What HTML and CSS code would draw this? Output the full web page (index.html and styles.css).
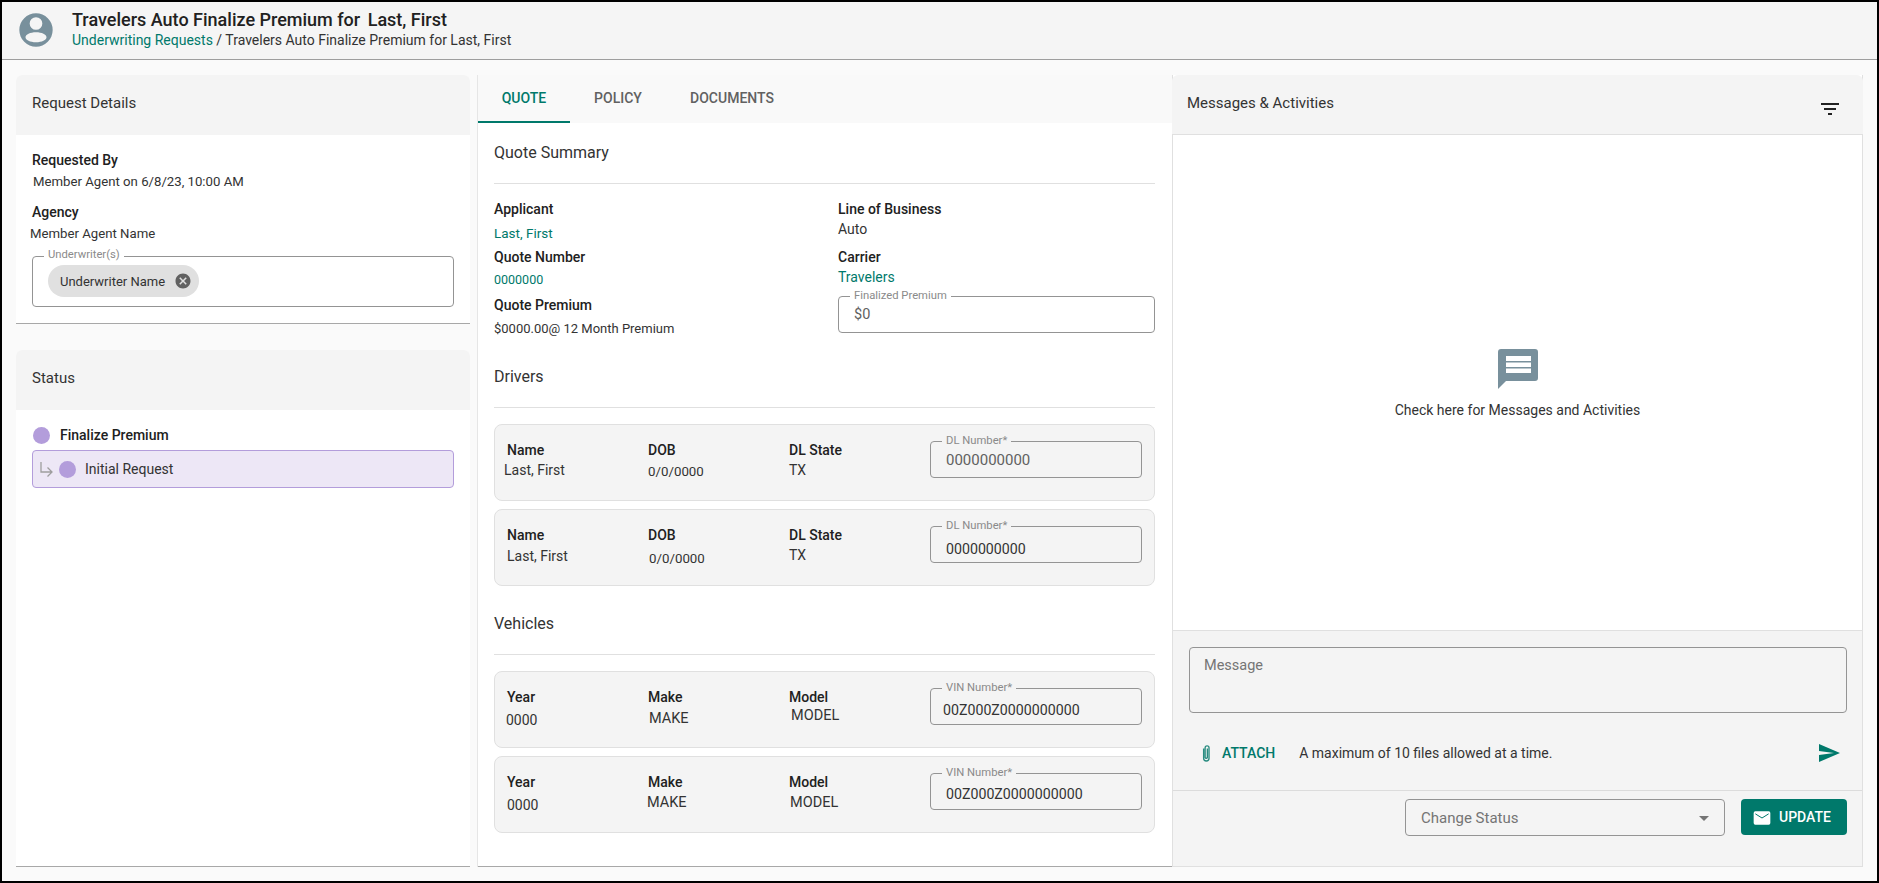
FILE: index.html
```html
<!DOCTYPE html>
<html lang="en">
<head>
<meta charset="utf-8">
<title>Travelers Auto Finalize Premium</title>
<link rel="stylesheet" href="styles.css">
</head>
<body>
<div class="frame">
  <header class="topbar">
    <svg class="avatar" viewBox="0 0 24 24"><path fill-rule="evenodd" d="M12 2a10 10 0 1 0 0 20 10 10 0 0 0 0-20zM12 4.3a3.8 3.8 0 1 0 0 7.6 3.8 3.8 0 0 0 0-7.6zM12 13.4c-3.5 0-6.3 1.3-6.3 3 0 1.7 2.8 3 6.3 3s6.3-1.3 6.3-3c0-1.7-2.8-3-6.3-3z"/></svg>
    <div class="crumbs">
      <div class="page-title">Travelers Auto Finalize Premium for <b>Last, First</b></div>
      <div class="trail"><a class="trail-link">Underwriting Requests</a> / Travelers Auto Finalize Premium for <span class="trail-name">Last, First</span></div>
    </div>
  </header>

  <main class="columns">
    <section class="left">
      <div class="card card-details">
        <h2 class="card-head">Request Details</h2>
        <div class="card-body">
          <div class="label">Requested By</div>
          <div class="value small nudge">Member Agent on 6/8/23, 10:00 AM</div>
          <div class="label agency">Agency</div>
          <div class="value small back">Member Agent Name</div>
          <div class="field uw">
            <span class="legend">Underwriter(s)</span>
            <span class="chip">Underwriter Name
              <svg class="chip-x" viewBox="0 0 24 24"><path d="M12 2C6.47 2 2 6.47 2 12s4.47 10 10 10 10-4.47 10-10S17.53 2 12 2zm5 13.59L15.59 17 12 13.41 8.41 17 7 15.59 10.59 12 7 8.41 8.41 7 12 10.59 15.59 7 17 8.41 13.41 12 17 15.59z"/></svg>
            </span>
          </div>
        </div>
      </div>
      <div class="card card-status">
        <h2 class="card-head">Status</h2>
        <div class="card-body">
          <div class="status-top"><i class="dot"></i><b>Finalize Premium</b></div>
          <div class="status-sub">
            <svg class="sub-arrow" viewBox="0 0 13 15"><path d="M1 0v10h11M7.5 5.5l4.5 4.5-4.5 4.5"/></svg>
            <i class="dot"></i>Initial Request
          </div>
        </div>
      </div>
    </section>

    <section class="center">
      <nav class="tabs">
        <span class="tab active">QUOTE</span>
        <span class="tab">POLICY</span>
        <span class="tab">DOCUMENTS</span>
      </nav>
      <div class="center-body">
        <h3 class="section-title summary-title">Quote Summary</h3>
        <div class="summary">
          <div class="sum-col">
            <div class="label">Applicant</div>
            <div class="value teal v-name">Last, First</div>
            <div class="label l-number">Quote Number</div>
            <div class="value teal v-number">0000000</div>
            <div class="label l-premium">Quote Premium</div>
            <div class="value v-premium">$0000.00@ 12 Month Premium</div>
          </div>
          <div class="sum-col">
            <div class="label">Line of Business</div>
            <div class="value">Auto</div>
            <div class="label l-carrier">Carrier</div>
            <div class="value teal">Travelers</div>
            <div class="field premium">
              <span class="legend">Finalized Premium</span>
              <span class="field-val muted">$0</span>
            </div>
          </div>
        </div>
        <h3 class="section-title">Drivers</h3>
        <div class="rows">
          <div class="row">
            <div class="cell"><div class="label">Name</div><div class="value sl3">Last, First</div></div>
            <div class="cell"><div class="label">DOB</div><div class="value date d2">0/0/0000</div></div>
            <div class="cell"><div class="label">DL State</div><div class="value">TX</div></div>
            <div class="field num"><span class="legend">DL Number*</span><span class="field-val muted big">0000000000</span></div>
          </div>
          <div class="row">
            <div class="cell"><div class="label">Name</div><div class="value d1">Last, First</div></div>
            <div class="cell"><div class="label">DOB</div><div class="value date d4 sr1">0/0/0000</div></div>
            <div class="cell"><div class="label">DL State</div><div class="value">TX</div></div>
            <div class="field num"><span class="legend">DL Number*</span><span class="field-val low4">0000000000</span></div>
          </div>
        </div>
        <h3 class="section-title veh-title">Vehicles</h3>
        <div class="rows">
          <div class="row">
            <div class="cell"><div class="label">Year</div><div class="value d3 sl1">0000</div></div>
            <div class="cell"><div class="label">Make</div><div class="value caps d2 sr1">MAKE</div></div>
            <div class="cell"><div class="label">Model</div><div class="value caps up1 sr2">MODEL</div></div>
            <div class="field num"><span class="legend">VIN Number*</span><span class="field-val low3 sl3">00Z000Z0000000000</span></div>
          </div>
          <div class="row">
            <div class="cell"><div class="label">Year</div><div class="value d3">0000</div></div>
            <div class="cell"><div class="label">Make</div><div class="value caps d1 sl1">MAKE</div></div>
            <div class="cell"><div class="label">Model</div><div class="value caps d1 sr1">MODEL</div></div>
            <div class="field num"><span class="legend">VIN Number*</span><span class="field-val low2">00Z000Z0000000000</span></div>
          </div>
        </div>
      </div>
    </section>

    <section class="right">
      <div class="right-head">
        <h2 class="right-title">Messages &amp; Activities</h2>
        <svg class="filter" viewBox="0 0 24 24"><path d="M10 18h4v-2h-4v2zM3 6v2h18V6H3zm3 7h12v-2H6v2z"/></svg>
      </div>
      <div class="feed">
        <svg class="bubble" viewBox="0 0 40 40"><path fill-rule="evenodd" d="M3 0h34a3 3 0 0 1 3 3v26a3 3 0 0 1-3 3H8l-8 8V3a3 3 0 0 1 3-3zM8 7v5h25V7zM8 13.500v4.500h25v-4.500zM8 19.500v4.500h25v-4.500z"/></svg>
        <p class="feed-text">Check here for Messages and Activities</p>
      </div>
      <div class="composer">
        <div class="message">Message</div>
        <div class="attach-row">
          <svg class="clip" viewBox="0 0 12 24"><path d="M6.500 6v12a1.600 1.600 0 0 1-3 0V5a2.600 2.600 0 0 1 5.200 0v14a3.600 3.600 0 0 1-7.200 0V6"/></svg>
          <span class="attach">ATTACH</span>
          <span class="attach-note">A maximum of 10 files allowed at a time.</span>
          <svg class="send" viewBox="0 0 24 24"><path d="M2 21l21-9L2 3v7l15 2-15 2z"/></svg>
        </div>
      </div>
      <div class="actions">
        <div class="select">Change Status<i class="caret"></i></div>
        <button class="update">
          <svg class="mail" viewBox="0 0 24 24"><path class="mail-body" d="M4 4h16a2 2 0 0 1 2 2v12a2 2 0 0 1-2 2H4a2 2 0 0 1-2-2V6a2 2 0 0 1 2-2z"/><path class="mail-flap" d="M4 7l8 5 8-5"/></svg>UPDATE
        </button>
      </div>
    </section>
  </main>
</div>
</body>
</html>
```

FILE: styles.css
```css
* { box-sizing: border-box; }
html, body { margin: 0; height: 100%; }
body { font-family: Roboto, "Liberation Sans", sans-serif; color: #212121; background: #fafafa; }
h2, h3, p { margin: 0; font-weight: 400; }

.frame { width: 1879px; height: 883px; border: 2px solid #000; display: flex; flex-direction: column; background: #fafafa; overflow: hidden; }

.topbar { height: 58px; flex: none; display: flex; background: #f5f5f5; border-bottom: 1px solid #9e9e9e; padding: 8px 0 0 14px; gap: 16px; }
.avatar { width: 40px; height: 40px; fill: #78909c; flex: none; }
.crumbs { margin-top: -1px; }
.page-title { font-size: 18px; font-weight: 500; line-height: 22px; color: #212121; }
.page-title b { font-weight: 500; margin-left: 3px; }
.trail { font-size: 14px; line-height: 17px; margin-top: 1px; color: #333; }
.trail-link { color: #00796b; }
.trail-name { margin-left: 0; }

.columns { flex: 1; display: grid; grid-template-columns: 454px 702px 691px; padding: 15px 0 14px 14px; }

.left { display: flex; flex-direction: column; }
.card { background: #fff; border-radius: 6px 6px 0 0; border-bottom: 1px solid #a8a8a8; }
.card-details { height: 249px; }
.card-status { margin-top: 26px; flex: 1; }
.card-head { height: 60px; padding: 0 16px 4px; display: flex; align-items: center; font-size: 15px; background: #f4f4f4; border-radius: 6px 6px 0 0; color: #333; }
.card-body { padding: 15px 16px 0; }

.label { font-size: 14px; font-weight: 500; line-height: 20px; color: #212121; }
.value { font-size: 14px; line-height: 20px; color: #333; }
.small { font-size: 13.2px; }
.nudge { margin: 2px 0 0 1px; }
.agency { margin-top: 10px; }
.back { margin: 2px 0 0 -2px; }
.value.teal { color: #00796b; }

.field { position: relative; border: 1px solid #949494; border-radius: 4px; }
.legend { position: absolute; left: 11px; top: -8px; padding: 0 4px; font-size: 11.25px; line-height: 14px; color: #8a8a8a; background: inherit; white-space: nowrap; }
.uw { margin-top: 12px; height: 51px; background: #fff; padding: 8px 15px; }
.uw .legend { top: -9px; }
.chip { display: inline-flex; align-items: center; height: 32px; padding: 0 7px 0 12px; border-radius: 16px; background: #e0e0e0; font-size: 13px; color: #333; }
.chip-x { width: 18px; height: 18px; fill: #616161; margin-left: 9px; }

.status-top { display: flex; align-items: center; font-size: 14px; height: 20px; margin-left: 1px; }
.status-top b { font-weight: 500; }
.status-top .dot { margin-right: 10px; }
.dot { width: 17px; height: 17px; border-radius: 50%; background: #b39ddb; flex: none; }
.status-sub { display: flex; align-items: center; height: 38px; margin-top: 5px; border: 1px solid #b39ddb; border-radius: 4px; background: #ede7f6; font-size: 14px; color: #333; padding-left: 7px; }
.status-sub .dot { margin: 0 9px 0 6px; }
.sub-arrow { width: 13px; height: 15px; fill: none; stroke: #9e9e9e; stroke-width: 1.3; flex: none; margin-top: 1px; }

.center { margin-left: 8px; background: #fff; border-bottom: 1px solid #a8a8a8; box-shadow: -1px 0 0 #e6e6e6; display: flex; flex-direction: column; }
.tabs { height: 48px; display: flex; background: #f9f9f9; flex: none; }
.tab { display: flex; align-items: center; justify-content: center; font-size: 14px; font-weight: 500; color: #616161; padding-bottom: 2px; }
.tab:nth-child(1) { width: 92px; }
.tab:nth-child(2) { width: 96px; }
.tab:nth-child(3) { width: 132px; }
.tab.active { color: #00796b; border-bottom: 2px solid #00796b; padding-bottom: 0; }
.center-body { padding: 0 17px 0 16px; }
.section-title { font-size: 16px; line-height: 20px; height: 60px; padding-top: 19px; border-bottom: 1px solid #e0e0e0; color: #333; }
.summary-title { height: 61px; padding-top: 20px; }
.veh-title { height: 69px; padding-top: 28px; }
.summary { display: grid; grid-template-columns: 344px 1fr; height: 164px; padding-top: 15px; }
.v-name { margin-top: 4px; font-size: 13.5px; }
.l-number { margin-top: 4px; }
.v-number { margin-top: 3px; font-size: 12.5px; }
.l-premium { margin-top: 5px; }
.v-premium { margin-top: 4px; font-size: 13px; }
.l-carrier { margin-top: 8px; }
.premium { height: 37px; margin-top: 9px; background: #fff; display: flex; align-items: center; padding: 0 15px; }
.field-val { font-size: 14.2px; color: #333; }
.muted { color: #616161; font-size: 14.5px; }
.big { font-size: 15px; }

.rows { display: flex; flex-direction: column; gap: 8px; padding-top: 16px; }
.row { height: 77px; background: #f4f4f4; border: 1px solid #e0e0e0; border-radius: 8px; display: grid; grid-template-columns: 141px 141px 141px 212px; padding: 15px 0 0 12px; }
.date { font-size: 13.3px; }
.caps { font-size: 14.5px; }
.d1 { margin-top: 1px; }
.d2 { margin-top: 2px; }
.d3 { margin-top: 3px; }
.d4 { margin-top: 4px; }
.up1 { margin-top: -1px; }
.sl1 { margin-left: -1px; }
.sl3 { margin-left: -3px; }
.sr1 { margin-left: 1px; }
.sr2 { margin-left: 2px; }
.num { height: 37px; margin-top: 1px; background: #f4f4f4; padding: 0 15px; display: flex; align-items: center; }
.low2 { margin-top: 4px; }
.low3 { margin-top: 6px; }
.low4 { margin-top: 8px; }

.right { background: #fff; display: flex; flex-direction: column; border-right: 1px solid #e0e0e0; border-left: 1px solid #e0e0e0; border-bottom: 1px solid #e0e0e0; }
.right-head { height: 60px; flex: none; background: #f4f4f4; border-bottom: 1px solid #e0e0e0; display: flex; justify-content: space-between; padding: 18px 21px 0 15px; border-radius: 6px 6px 0 0; margin: 0 -1px; }
.right-title { font-size: 15px; line-height: 20px; color: #333; }
.filter { width: 24px; height: 24px; fill: #212121; margin-top: 4px; }
.feed { height: 495px; flex: none; display: flex; flex-direction: column; align-items: center; padding-top: 214px; }
.bubble { width: 40px; height: 40px; fill: #78909c; }
.feed-text { font-size: 14px; line-height: 20px; margin-top: 11px; color: #333; }
.composer { height: 161px; flex: none; background: #f4f4f4; border-top: 1px solid #e0e0e0; border-bottom: 1px solid #dcdcdc; padding: 16px 15px 0 16px; }
.message { height: 66px; border: 1px solid #949494; border-radius: 4px; font-size: 14.5px; line-height: 18px; color: #757575; padding: 9px 14px; }
.attach-row { display: flex; align-items: center; margin-top: 28px; height: 24px; padding-left: 12px; }
.clip { width: 12px; height: 18px; fill: none; stroke: #2a8c80; stroke-width: 1.8; flex: none; }
.attach { font-size: 14px; font-weight: 500; color: #00796b; margin-left: 9px; }
.attach-note { font-size: 14px; color: #333; margin-left: 24px; flex: 1; }
.send { width: 24px; height: 24px; fill: #00796b; margin-right: 6px; }
.actions { flex: 1; background: #f4f4f4; display: flex; justify-content: flex-end; padding: 8px 15px 0; gap: 16px; align-items: flex-start; }
.select { width: 320px; height: 37px; border: 1px solid #949494; border-radius: 4px; font-size: 15px; color: #757575; display: flex; align-items: center; justify-content: space-between; padding: 1px 15px 0; }
.caret { width: 0; height: 0; border-left: 5px solid transparent; border-right: 5px solid transparent; border-top: 5px solid #757575; }
.update { width: 106px; height: 36px; background: #00796b; color: #fff; border: 0; border-radius: 4px; font: 500 14px Roboto, sans-serif; display: flex; align-items: center; gap: 7px; padding: 0 0 1px 11px; }
.mail { width: 20px; height: 20px; margin-top: 3px; }
.mail-body { fill: #fff; }
.mail-flap { fill: none; stroke: #00796b; stroke-width: 1.2; }
```
